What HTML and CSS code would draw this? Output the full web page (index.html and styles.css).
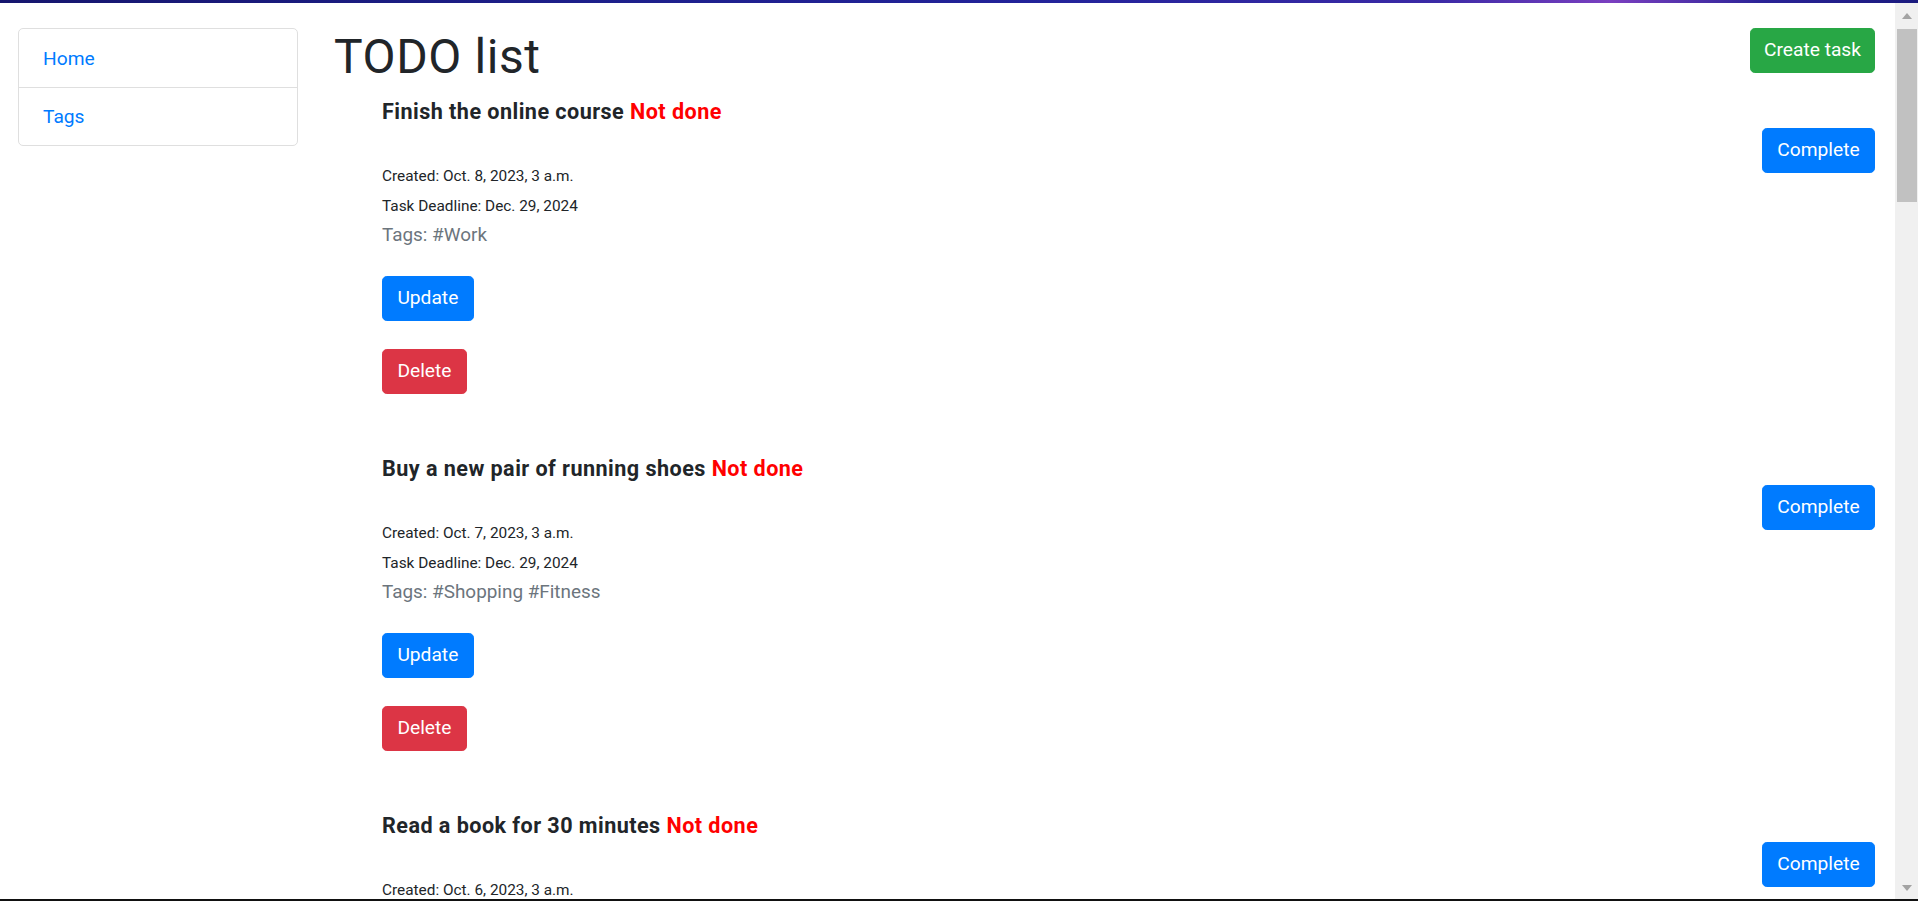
FILE: index.html
```
<!DOCTYPE html>
<html lang="en">
<head>
<meta charset="utf-8">
<title>TODO list</title>
<link rel="stylesheet" href="styles.css">
</head>
<body>
<div class="window-top"></div>
<div class="viewport">
  <div class="page">
    <aside class="sidebar">
      <nav class="nav-list">
        <a class="nav-item" href="#">Home</a>
        <a class="nav-item" href="#">Tags</a>
      </nav>
    </aside>
    <main class="main">
      <div class="main-header">
        <h1 class="page-title">TODO list</h1>
        <button class="btn btn-success btn-create">Create task</button>
      </div>
      <ul class="task-list">
        <li class="task">
          <div class="task-body">
            <h5 class="task-title">Finish the online course <span class="status">Not done</span></h5>
            <div class="task-meta">
              <div class="meta-line"><small>Created: Oct. 8, 2023, 3 a.m.</small></div>
              <div class="meta-line"><small>Task Deadline: Dec. 29, 2024</small></div>
              <div class="meta-line tags">Tags: #Work</div>
            </div>
            <div class="task-actions">
              <button class="btn btn-primary">Update</button>
              <button class="btn btn-danger">Delete</button>
            </div>
          </div>
          <button class="btn btn-primary btn-complete">Complete</button>
        </li>
        <li class="task">
          <div class="task-body">
            <h5 class="task-title">Buy a new pair of running shoes <span class="status">Not done</span></h5>
            <div class="task-meta">
              <div class="meta-line"><small>Created: Oct. 7, 2023, 3 a.m.</small></div>
              <div class="meta-line"><small>Task Deadline: Dec. 29, 2024</small></div>
              <div class="meta-line tags">Tags: #Shopping #Fitness</div>
            </div>
            <div class="task-actions">
              <button class="btn btn-primary">Update</button>
              <button class="btn btn-danger">Delete</button>
            </div>
          </div>
          <button class="btn btn-primary btn-complete">Complete</button>
        </li>
        <li class="task">
          <div class="task-body">
            <h5 class="task-title">Read a book for 30 minutes <span class="status">Not done</span></h5>
            <div class="task-meta">
              <div class="meta-line"><small>Created: Oct. 6, 2023, 3 a.m.</small></div>
            </div>
          </div>
          <button class="btn btn-primary btn-complete">Complete</button>
        </li>
      </ul>
    </main>
  </div>
  <div class="scrollbar" aria-hidden="true">
    <div class="sb-btn sb-up"><span class="sb-arrow-up"></span></div>
    <div class="sb-track"><div class="sb-thumb"></div></div>
    <div class="sb-btn sb-down"><span class="sb-arrow-down"></span></div>
  </div>
</div>
<div class="window-bottom"></div>
</body>
</html>
```
FILE: styles.css
```
* { box-sizing: border-box; }

html, body {
  margin: 0;
  height: 100%;
  overflow: hidden;
}

body {
  display: flex;
  flex-direction: column;
  background: #fff;
  color: #212529;
  font-family: Roboto, "Liberation Sans", Arial, sans-serif;
  font-size: 19.2px;
  line-height: 1.5;
}

.window-top {
  flex: none;
  height: 3px;
  background: linear-gradient(90deg, #16166e 0%, #1d1f8a 30%, #23239a 55%, #3b2aa6 75%, #7a3fc0 84%, #2a2396 92%, #1a1a7e 100%);
}

.window-bottom {
  flex: none;
  height: 2px;
  background: #111;
}

.viewport {
  flex: 1;
  min-height: 0;
  display: flex;
  overflow: hidden;
}

/* scrollbar */
.scrollbar {
  flex: none;
  width: 23px;
  display: flex;
  flex-direction: column;
  background: #f0f0f0;
}

.sb-btn {
  flex: none;
  height: 26px;
  display: flex;
  justify-content: center;
  align-items: center;
  padding-left: 1px;
}

.sb-down {
  padding-top: 4px;
}

.sb-arrow-up,
.sb-arrow-down {
  width: 0;
  height: 0;
  border-left: 5px solid transparent;
  border-right: 5px solid transparent;
}

.sb-arrow-up { border-bottom: 6px solid #a3a3a3; }
.sb-arrow-down { border-top: 6px solid #a3a3a3; }

.sb-track {
  flex: 1;
  padding: 0 1px 0 2px;
}

.sb-thumb {
  height: 173px;
  background: #c1c1c1;
}

/* page */
.page {
  flex: 1;
  min-width: 0;
  overflow: hidden;
  display: flex;
  align-items: flex-start;
  gap: 36px;
  padding: 25px 20px 0 18px;
}

.sidebar {
  flex: none;
  width: 280px;
}

.nav-list {
  border: 1px solid #dfdfdf;
  border-radius: 5px;
}

.nav-item {
  display: block;
  padding: 15.6px 24px 13.2px;
  line-height: 28.8px;
  color: #007bff;
  text-decoration: none;
}

.nav-item + .nav-item {
  border-top: 1px solid #dfdfdf;
}

.main {
  flex: 1;
  min-width: 0;
}

.main-header {
  display: flex;
  justify-content: space-between;
  align-items: flex-start;
}

.page-title {
  margin: 0;
  padding-top: 1px;
  font-size: 48px;
  font-weight: 400;
  line-height: 56.6px;
  letter-spacing: 0.6px;
}

.btn {
  display: inline-block;
  font-family: inherit;
  font-size: 19.2px;
  line-height: 28.8px;
  padding: 7.2px 14.4px;
  border: 1.2px solid transparent;
  border-radius: 4.8px;
  color: #fff;
  cursor: pointer;
}

.btn-create {
  padding-left: 13px;
  padding-right: 13px;
}

.btn-success { background: #28a745; border-color: #28a745; }
.btn-primary { background: #007bff; border-color: #007bff; }
.btn-danger  { background: #dc3545; border-color: #dc3545; }

.task-list {
  list-style: none;
  margin: 12px 0 0;
  padding: 0 0 0 48px;
}

.task {
  display: flex;
  justify-content: space-between;
  align-items: flex-start;
  padding-bottom: 60.4px;
}

.task-title {
  margin: 0 0 35px;
  padding-top: 1.6px;
  font-size: 21.6px;
  font-weight: 700;
  line-height: 26px;
  letter-spacing: 0.45px;
}

.status {
  color: #ff0000;
}

.task-meta {
  margin-bottom: 27px;
  padding-top: 1px;
}

.meta-line {
  line-height: 28.8px;
}

.meta-line small {
  font-size: 15.36px;
}

.tags {
  color: #6c757d;
  font-size: 18.9px;
  line-height: 27.8px;
}

.task-actions {
  display: flex;
  flex-direction: column;
  align-items: flex-start;
  gap: 28.4px;
}

.btn-complete {
  margin-top: 30px;
}
```
